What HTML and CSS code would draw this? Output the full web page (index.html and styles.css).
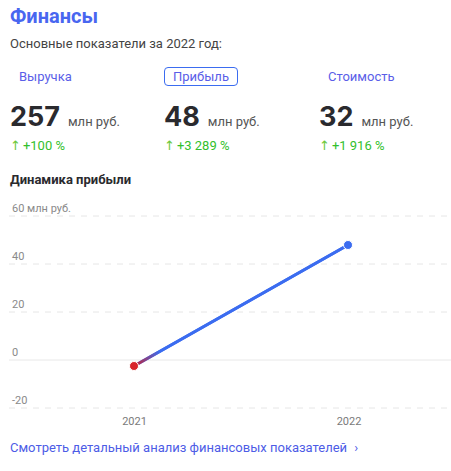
FILE: index.html
```html
<!DOCTYPE html>
<html lang="ru">
<head>
<meta charset="utf-8">
<link rel="stylesheet" href="styles.css">
</head>
<body>
<div class="card">
  <h1 class="title">Финансы</h1>
  <p class="subtitle">Основные показатели за 2022 год:</p>
  <div class="metrics">
    <div class="metric">
      <span class="tab">Выручка</span>
      <div class="value"><span class="num">257</span><span class="unit">млн руб.</span></div>
      <div class="change"><span class="arrow">↑</span>+100 %</div>
    </div>
    <div class="metric">
      <span class="tab tab-active">Прибыль</span>
      <div class="value"><span class="num">48</span><span class="unit">млн руб.</span></div>
      <div class="change"><span class="arrow">↑</span>+3 289 %</div>
    </div>
    <div class="metric">
      <span class="tab">Стоимость</span>
      <div class="value"><span class="num">32</span><span class="unit">млн руб.</span></div>
      <div class="change"><span class="arrow">↑</span>+1 916 %</div>
    </div>
  </div>
  <h2 class="chart-title">Динамика прибыли</h2>
  <svg class="chart" width="451" height="240" viewBox="0 195 451 240" xmlns="http://www.w3.org/2000/svg">
    <defs>
      <linearGradient id="lg" gradientUnits="userSpaceOnUse" x1="134" y1="365" x2="348" y2="244">
        <stop offset="0" stop-color="#c8202a"/>
        <stop offset="0.12" stop-color="#3b6cf0"/>
        <stop offset="1" stop-color="#3b6cf0"/>
      </linearGradient>
      <filter id="glow" x="-20%" y="-20%" width="140%" height="140%">
        <feGaussianBlur in="SourceAlpha" stdDeviation="3"/>
        <feOffset dy="3"/>
        <feComponentTransfer><feFuncA type="linear" slope="0.18"/></feComponentTransfer>
        <feFlood flood-color="#3b6cf0"/>
        <feComposite operator="in" in2="SourceAlpha"/>
        <feMerge><feMergeNode/><feMergeNode in="SourceGraphic"/></feMerge>
      </filter>
    </defs>
    <g class="grid">
      <line x1="9" y1="215" x2="451" y2="215" class="dash"/>
      <line x1="9" y1="263" x2="451" y2="263" class="dash"/>
      <line x1="9" y1="311" x2="451" y2="311" class="dash"/>
      <line x1="9" y1="359" x2="451" y2="359" class="solid"/>
      <line x1="9" y1="407" x2="451" y2="407" class="dash"/>
    </g>
    <g class="ylabels">
      <text x="12" y="211">60 млн руб.</text>
      <text x="12" y="259">40</text>
      <text x="12" y="307">20</text>
      <text x="12" y="355">0</text>
      <text x="12" y="403">-20</text>
    </g>
    <line x1="134" y1="365" x2="348" y2="244" stroke="url(#lg)" stroke-width="3" stroke-linecap="round" class="series"/>
    <circle cx="134" cy="365" r="4.5" fill="#d8232a" stroke="#fff" stroke-width="1"/>
    <circle cx="348" cy="244" r="4.5" fill="#3b6cf0" stroke="#fff" stroke-width="1"/>
    <g class="xlabels">
      <text x="134.5" y="424">2021</text>
      <text x="349" y="424">2022</text>
    </g>
  </svg>
  <a class="more" href="#">Смотреть детальный анализ финансовых показателей <span class="chev">›</span></a>
</div>
</body>
</html>
```
FILE: styles.css
```css
* { box-sizing: border-box; }
html, body { margin: 0; padding: 0; background: #fff; }
body {
  font-family: Roboto, "Noto Sans", "DejaVu Sans", sans-serif;
  color: #333;
}
.card {
  width: 451px;
  padding: 4px 0 0 10px;
  overflow: hidden;
}
.title {
  margin: 0;
  font-size: 20px;
  font-weight: 700;
  line-height: 24px;
  color: #4866f0;
}
.subtitle {
  margin: 8px 0 0;
  font-size: 13px;
  line-height: 16px;
  color: #444;
}
.metrics {
  display: grid;
  grid-template-columns: 154px 155px 1fr;
  margin-top: 15px;
}
.metric {
  display: flex;
  flex-direction: column;
  align-items: flex-start;
}
.tab {
  display: inline-block;
  height: 19px;
  line-height: 17px;
  padding: 0 8px;
  border: 1px solid transparent;
  border-radius: 4px;
  font-size: 13px;
  color: #5a5ee8;
}
.tab-active {
  border-color: #3b6cf0;
}
.value {
  display: flex;
  align-items: baseline;
  margin-top: 16px;
  height: 30px;
}
.num {
  font-family: Inter, Roboto, sans-serif;
  font-size: 27px;
  font-weight: 700;
  line-height: 30px;
  color: #2a2a2e;
}
.unit {
  margin-left: 8px;
  font-size: 13px;
  color: #555;
}
.change {
  margin-top: 6px;
  font-size: 13px;
  line-height: 16px;
  color: #33bf2c;
}
.arrow {
  margin-right: 2px;
  color: #6cc83a;
}
.chart-title {
  margin: 18px 0 0;
  font-size: 13px;
  font-weight: 700;
  line-height: 16px;
  color: #2a2a2e;
}
.chart {
  display: block;
  margin: 8px 0 0 -10px;
}
.dash { stroke: #e6e6e6; stroke-width: 1; stroke-dasharray: 6 6; }
.solid { stroke: #e8e8e8; stroke-width: 1; }
.ylabels text {
  font-family: Roboto, "Noto Sans", sans-serif;
  font-size: 11px;
  fill: #8a8a8a;
}
.xlabels text {
  font-family: Roboto, "Noto Sans", sans-serif;
  font-size: 11px;
  fill: #7a7a7a;
  text-anchor: middle;
}
.series { filter: url(#glow); }
.more {
  display: block;
  margin-top: 4px;
  font-size: 13px;
  line-height: 16px;
  color: #4d5ce6;
  text-decoration: none;
}
.chev {
  margin-left: 4px;
  font-size: 13px;
}
```
